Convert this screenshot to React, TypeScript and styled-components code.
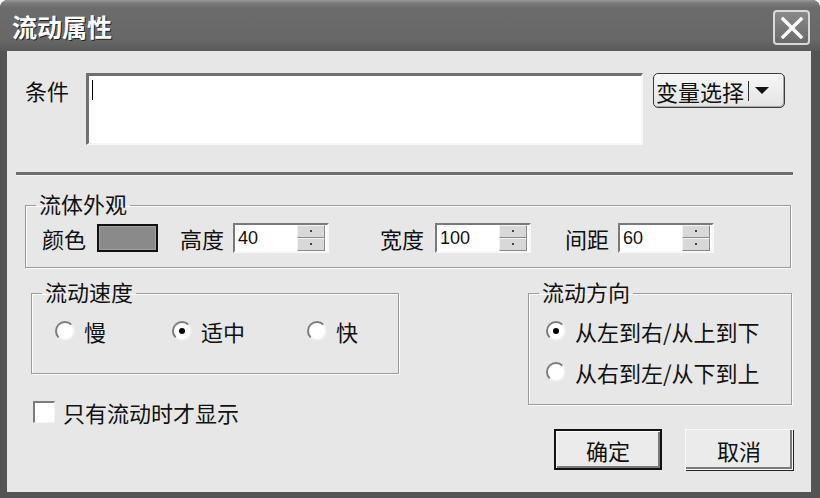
import React from 'react'
import styled, { createGlobalStyle } from 'styled-components'

const GlobalStyle = createGlobalStyle`
  html, body {
    margin: 0;
    padding: 0;
    background: #ffffff;
  }
  body {
    font-family: "Noto Sans CJK SC", "Noto Sans", sans-serif;
  }
`

const Frame = styled.div`
  width: 820px;
  height: 498px;
  box-sizing: border-box;
  background: #545454;
  border-radius: 8px 8px 0 0;
  display: flex;
  flex-direction: column;
  overflow: hidden;
`

const TitleBar = styled.div`
  height: 51px;
  flex: none;
  display: flex;
  align-items: center;
  justify-content: space-between;
  padding: 0 10px 0 12px;
  background: linear-gradient(180deg, #9a9a9a 0px, #7a7a7a 3px, #6c6c6c 8px, #676767 40px, #5a5a5a 51px);
`

const Title = styled.div`
  color: #ffffff;
  font-size: 25px;
  font-weight: 700;
  text-shadow: 1px 1px 0 #222222;
  line-height: 1;
  margin-top: 2px;
`

const CloseButton = styled.div`
  width: 33px;
  height: 31px;
  margin-top: 4px;
  border: 2px solid #d9d9d9;
  border-radius: 4px;
  background: linear-gradient(180deg, #8a8a8a, #6a6a6a);
  display: flex;
  align-items: center;
  justify-content: center;
`

const Body = styled.div`
  flex: 1;
  margin: 0 9px 6px 7px;
  background: #e7e7e7;
  padding: 22px 0 0 0;
  display: flex;
  flex-direction: column;
  font-size: 22px;
  color: #111111;
`

const ConditionRow = styled.div`
  display: flex;
  align-items: flex-start;
  padding-left: 18px;
`

const Label = styled.span<{ $gap?: number }>`
  font-size: 22px;
  line-height: 24px;
  white-space: nowrap;
  margin-right: ${p => p.$gap ?? 10}px;
`

const ConditionLabel = styled(Label)`
  margin-top: 5px;
`

const ExprBox = styled.div`
  width: 557px;
  height: 72px;
  box-sizing: border-box;
  background: #ffffff;
  border-top: 3px solid #707070;
  border-left: 3px solid #707070;
  border-right: 2px solid #f7f7f7;
  border-bottom: 2px solid #f7f7f7;
  padding: 4px 0 0 3px;
`

const Caret = styled.div`
  width: 1px;
  height: 20px;
  background: #000000;
`

const VarButton = styled.div`
  margin-left: 10px;
  height: 35px;
  width: 132px;
  box-sizing: border-box;
  border: 1px solid #3c3c3c;
  border-radius: 5px;
  background: linear-gradient(180deg, #f6f6f6, #e4e4e4);
  box-shadow: inset -1px -1px 0 #a8a8a8;
  display: flex;
  align-items: center;
  padding-left: 2px;
  font-size: 22px;
`

const VarDivider = styled.span`
  width: 1px;
  height: 20px;
  background: #333333;
  margin: 0 6px 0 4px;
`

const Arrow = styled.span`
  width: 0;
  height: 0;
  border-left: 7px solid transparent;
  border-right: 7px solid transparent;
  border-top: 7px solid #111111;
`

const Separator = styled.div`
  margin: 27px 0 0 9px;
  width: 777px;
  height: 3px;
  background: #6f6f6f;
  border-bottom: 1px solid #f4f4f4;
`

const Group = styled.fieldset<{ $width: number; $left: number; $top?: number }>`
  margin: ${p => p.$top ?? 0}px 0 0 ${p => p.$left}px;
  width: ${p => p.$width}px;
  box-sizing: border-box;
  border: 1px solid #9c9c9c;
  box-shadow: 1px 1px 0 #fbfbfb, inset 1px 1px 0 #fbfbfb;
  padding: 0;
  min-width: 0;
`

const Legend = styled.legend`
  font-size: 22px;
  line-height: 24px;
  padding: 0 3px 4px 3px;
  margin-left: 10px;
`

const GroupContent = styled.div<{ $pad: string; $gap?: number }>`
  padding: ${p => p.$pad};
  display: flex;
  flex-direction: column;
  gap: ${p => p.$gap ?? 0}px;
`

const LookRow = styled.div`
  display: flex;
  align-items: center;
  height: 31px;
`

const Swatch = styled.div`
  width: 61px;
  height: 28px;
  box-sizing: border-box;
  border: 2px solid #111111;
  background: #8a8a8a;
  box-shadow: inset 0 0 0 1px #a0a0a0;
  margin-right: 22px;
`

const Spin = styled.div<{ $after: number }>`
  width: 96px;
  height: 30px;
  box-sizing: border-box;
  display: flex;
  background: #ffffff;
  border-top: 2px solid #7a7a7a;
  border-left: 2px solid #7a7a7a;
  border-right: 2px solid #f8f8f8;
  border-bottom: 2px solid #f8f8f8;
  margin-right: ${p => p.$after}px;
`

const SpinValue = styled.div`
  flex: 1;
  font-family: "Liberation Sans", Arial, sans-serif;
  font-size: 18px;
  line-height: 26px;
  padding-left: 3px;
  color: #111111;
`

const SpinButtons = styled.div`
  width: 28px;
  margin-right: 2px;
  display: flex;
  flex-direction: column;
`

const SpinHalf = styled.div`
  flex: 1;
  background: #d8d8d8;
  border-top: 1px solid #f4f4f4;
  border-left: 1px solid #f4f4f4;
  border-right: 1px solid #8a8a8a;
  border-bottom: 1px solid #8a8a8a;
  display: flex;
  align-items: center;
  justify-content: center;
`

const SpinDot = styled.span`
  width: 2px;
  height: 2px;
  background: #444444;
`

const Lower = styled.div`
  display: flex;
  margin-top: 11px;
`

const LeftCol = styled.div`
  display: flex;
  flex-direction: column;
`

const RightCol = styled.div`
  display: flex;
  flex-direction: column;
  margin-left: 129px;
`

const SpeedRow = styled.div`
  display: flex;
  align-items: center;
`

const Option = styled.label<{ $width?: number }>`
  display: flex;
  align-items: center;
  height: 22px;
  ${p => (p.$width ? `width: ${p.$width}px;` : '')}
  font-size: 22px;
  line-height: 22px;
  white-space: nowrap;
`

const Radio = styled.span<{ $checked?: boolean }>`
  position: relative;
  width: 20px;
  height: 20px;
  box-sizing: border-box;
  border-radius: 50%;
  background: #ffffff;
  border: 2px solid;
  border-color: #7c7c7c #f0f0f0 #f0f0f0 #7c7c7c;
  margin-right: 9px;
  flex: none;
  &::after {
    content: '';
    display: ${p => (p.$checked ? 'block' : 'none')};
    position: absolute;
    left: 5px;
    top: 5px;
    width: 6px;
    height: 6px;
    border-radius: 50%;
    background: #000000;
  }
`

const CheckRow = styled.label`
  display: flex;
  align-items: center;
  margin: 27px 0 0 26px;
  font-size: 22px;
  line-height: 22px;
`

const CheckBox = styled.span`
  width: 22px;
  height: 22px;
  box-sizing: border-box;
  background: #ffffff;
  border-top: 2px solid #7c7c7c;
  border-left: 2px solid #7c7c7c;
  border-right: 1px solid #f4f4f4;
  border-bottom: 1px solid #f4f4f4;
  margin-right: 8px;
`

const Actions = styled.div`
  display: flex;
  gap: 23px;
  margin: 24px 0 0 26px;
`

const PushButton = styled.div<{ $default?: boolean }>`
  width: 108px;
  height: 41px;
  box-sizing: border-box;
  display: flex;
  align-items: center;
  justify-content: center;
  background: #ebebeb;
  font-size: 22px;
  border: ${p => (p.$default ? '2px solid #111111' : '1px solid #f8f8f8')};
  box-shadow: ${p =>
    p.$default
      ? 'inset 1px 1px 0 #fafafa, inset -2px -2px 0 #7a7a7a'
      : 'inset -2px -2px 0 #7a7a7a, 1px 1px 0 #222222'};
`

const CloseIcon = () => (
  <svg width="24" height="22" viewBox="0 0 24 22">
    <path d="M3 2 L21 20 M21 2 L3 20" stroke="#ffffff" strokeWidth="3.4" strokeLinecap="square" />
  </svg>
)

const SpinBox = ({ value, after }: { value: string; after: number }) => (
  <Spin $after={after}>
    <SpinValue>{value}</SpinValue>
    <SpinButtons>
      <SpinHalf><SpinDot /></SpinHalf>
      <SpinHalf><SpinDot /></SpinHalf>
    </SpinButtons>
  </Spin>
)

const App = () => {
  return (
    <>
      <GlobalStyle />
      <Frame>
        <TitleBar>
          <Title>流动属性</Title>
          <CloseButton><CloseIcon /></CloseButton>
        </TitleBar>
        <Body>
          <ConditionRow>
            <ConditionLabel $gap={17}>条件</ConditionLabel>
            <ExprBox><Caret /></ExprBox>
            <VarButton>
              变量选择<VarDivider /><Arrow />
            </VarButton>
          </ConditionRow>

          <Separator />

          <Group $left={18} $width={766} $top={15}>
            <Legend>流体外观</Legend>
            <GroupContent $pad="3px 0 14px 16px">
              <LookRow>
                <Label $gap={11}>颜色</Label>
                <Swatch />
                <Label $gap={9}>高度</Label>
                <SpinBox value="40" after={51} />
                <Label $gap={11}>宽度</Label>
                <SpinBox value="100" after={34} />
                <Label $gap={9}>间距</Label>
                <SpinBox value="60" after={0} />
              </LookRow>
            </GroupContent>
          </Group>

          <Lower>
            <LeftCol>
              <Group $left={24} $width={368}>
                <Legend>流动速度</Legend>
                <GroupContent $pad="13px 0 31px 23px">
                  <SpeedRow>
                    <Option $width={117}><Radio />慢</Option>
                    <Option $width={135}><Radio $checked />适中</Option>
                    <Option><Radio />快</Option>
                  </SpeedRow>
                </GroupContent>
              </Group>
              <CheckRow><CheckBox />只有流动时才显示</CheckRow>
            </LeftCol>
            <RightCol>
              <Group $left={0} $width={264}>
                <Legend>流动方向</Legend>
                <GroupContent $pad="13px 0 21px 17px" $gap={19}>
                  <Option><Radio $checked />从左到右/从上到下</Option>
                  <Option><Radio />从右到左/从下到上</Option>
                </GroupContent>
              </Group>
              <Actions>
                <PushButton $default>确定</PushButton>
                <PushButton>取消</PushButton>
              </Actions>
            </RightCol>
          </Lower>
        </Body>
      </Frame>
    </>
  )
}

export default App
